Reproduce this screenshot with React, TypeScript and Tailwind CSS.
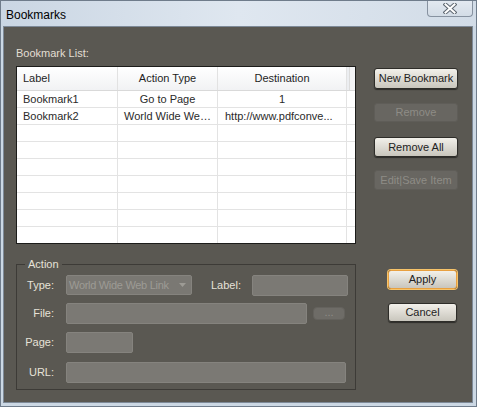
import React from "react";

const font = { fontFamily: "'Liberation Sans', Arial, sans-serif" };

const rows = [
  { label: "Bookmark1", type: "Go to Page", dest: "1", destLeft: false },
  { label: "Bookmark2", type: "World Wide We…", dest: "http://www.pdfconve...", destLeft: true },
  { label: "", type: "", dest: "", destLeft: false },
  { label: "", type: "", dest: "", destLeft: false },
  { label: "", type: "", dest: "", destLeft: false },
  { label: "", type: "", dest: "", destLeft: false },
  { label: "", type: "", dest: "", destLeft: false },
  { label: "", type: "", dest: "", destLeft: false },
  { label: "", type: "", dest: "", destLeft: false },
];

function Btn({ children, disabled, focus, className }: { children: React.ReactNode; disabled?: boolean; focus?: boolean; className?: string }) {
  if (disabled) {
    return (
      <div className={`flex items-center justify-center whitespace-nowrap rounded-[3px] border border-[#5f5d58] bg-[#686661] text-[11px] text-[#8e8c86] ${className ?? ""}`}>
        {children}
      </div>
    );
  }
  return (
    <div
      className={`flex items-center justify-center whitespace-nowrap rounded-[3px] border bg-gradient-to-b from-[#f2f0ea] to-[#c9c6bd] text-[11px] text-[#222] shadow-[0_1px_1px_rgba(0,0,0,0.5)] ${
        focus ? "border-[#e8a040] ring-1 ring-[#f7c46a]" : "border-[#2e2d29]"
      } ${className ?? ""}`}
    >
      {children}
    </div>
  );
}

function Field({ className }: { className?: string }) {
  return <div className={`rounded-[2px] border border-[#85837e] bg-[#7b7974] ${className ?? ""}`} />;
}

function Lbl({ children }: { children: React.ReactNode }) {
  return <div className="w-[37px] whitespace-nowrap text-right text-[11px] text-[#e6e2d8]">{children}</div>;
}

export default function App() {
  return (
    <div style={font} className="h-[407px] w-[477px] overflow-hidden border border-[#6f7c8b] bg-[#ccd8e4]">
      {/* title bar */}
      <div className="flex h-[25px] items-start bg-gradient-to-r from-[#cad6e3] via-[#dfe7f0] to-[#d2dce7]">
        <div className="pl-[5px] pt-[5px] text-[12px] text-black">Bookmarks</div>
        <div className="ml-auto mr-[3px] flex h-[17px] w-[46px] -translate-y-[1px] items-center justify-center rounded-b-[4px] border border-t-0 border-[#8792a0] bg-gradient-to-b from-[#e4eaf1] to-[#d3dce6]">
          <svg width="14" height="11" viewBox="0 0 14 11">
            <path d="M2.5 1.5 L11.5 9.5 M11.5 1.5 L2.5 9.5" stroke="#5d6670" strokeWidth="4" strokeLinecap="square" />
            <path d="M2.5 1.5 L11.5 9.5 M11.5 1.5 L2.5 9.5" stroke="#ffffff" strokeWidth="2" strokeLinecap="square" />
          </svg>
        </div>
      </div>

      {/* body */}
      <div className="ml-[2px] flex h-[377px] w-[470px] border border-[#7e8a98] bg-[#5a5852]">
        {/* left column */}
        <div className="ml-[12px] flex w-[340px] flex-col pt-[16px]">
          <div className="text-[11px] leading-[21px] text-[#e2ded3]">Bookmark List:</div>

          <div className="mt-[2px] h-[178px] overflow-hidden border border-[#1c1c1a] bg-white">
            <div className="flex h-[24px] border-b border-[#d9d9d9] bg-gradient-to-b from-white to-[#f1f2f4] text-[11px] text-[#1e1e1e]">
              <div className="flex w-[101px] items-center border-r border-[#e2e2e2] pl-[6px]">Label</div>
              <div className="flex w-[100px] items-center justify-center border-r border-[#e2e2e2]">Action Type</div>
              <div className="flex w-[129px] items-center justify-center border-r border-[#e2e2e2]">Destination</div>
              <div className="w-[3px] border-r border-[#dcdcdc] bg-[#eceef1]" />
              <div className="flex-1 bg-[#f3f4f6]" />
            </div>
            {rows.map((r, i) => (
              <div key={i} className="flex h-[17px] whitespace-nowrap border-b border-[#e3e3e3] text-[11px] text-[#2a2a2a]">
                <div className="flex w-[101px] items-center border-r border-[#e3e3e3] pl-[6px]">{r.label}</div>
                <div className="flex w-[100px] items-center justify-center border-r border-[#e3e3e3]">{r.type}</div>
                <div className={`flex w-[129px] items-center overflow-hidden border-r border-[#e3e3e3] ${r.destLeft ? "pl-[7px]" : "justify-center"}`}>
                  {r.dest}
                </div>
                <div className="flex-1" />
              </div>
            ))}
          </div>

          {/* Action group */}
          <div className="relative mt-[20px] h-[126px] border border-[#3d3b37] pt-[10px]">
            <div className="absolute -top-[9px] left-[8px] bg-[#5a5852] px-[3px] text-[11px] leading-[16px] text-[#e6e2d8]">Action</div>

            <div className="flex h-[20px] items-center">
              <Lbl>Type:</Lbl>
              <div className="ml-[12px] flex h-[20px] w-[126px] items-center whitespace-nowrap rounded-[2px] border border-[#85837e] bg-[#7a7873] pl-[2px] pr-[5px] text-[11px] tracking-[-0.3px] text-[#9d9b95]">
                <span>World Wide Web Link</span>
                <svg className="ml-auto shrink-0" width="7" height="4" viewBox="0 0 7 4">
                  <path d="M0 0 H7 L3.5 4 Z" fill="#9d9b95" />
                </svg>
              </div>
              <div className="ml-[19px] text-[11px] text-[#e6e2d8]">Label:</div>
              <Field className="ml-[11px] h-[21px] w-[96px]" />
            </div>

            <div className="mt-[8px] flex h-[21px] items-center">
              <Lbl>File:</Lbl>
              <Field className="ml-[12px] h-[21px] w-[241px]" />
              <div className="ml-[6px] flex h-[13px] w-[32px] items-center justify-center rounded-[4px] border border-[#64625d] bg-[#6e6c67] pb-[2px] text-[11px] text-[#8f8d87]">
                ...
              </div>
            </div>

            <div className="mt-[8px] flex h-[21px] items-center">
              <Lbl>Page:</Lbl>
              <Field className="ml-[12px] h-[21px] w-[67px]" />
            </div>

            <div className="mt-[9px] flex h-[21px] items-center">
              <Lbl>URL:</Lbl>
              <Field className="ml-[12px] h-[21px] w-[280px]" />
            </div>
          </div>
        </div>

        {/* right column */}
        <div className="flex flex-col">
          <Btn className="ml-[18px] mt-[41px] h-[21px] w-[84px]">New Bookmark</Btn>
          <Btn disabled className="ml-[18px] mt-[14px] h-[19px] w-[84px]">Remove</Btn>
          <Btn className="ml-[18px] mt-[15px] h-[20px] w-[84px]">Remove All</Btn>
          <Btn disabled className="ml-[18px] mt-[13px] h-[20px] w-[84px]">Edit|Save Item</Btn>
          <Btn focus className="ml-[32px] mt-[80px] h-[19px] w-[69px]">Apply</Btn>
          <Btn className="ml-[32px] mt-[14px] h-[19px] w-[69px]">Cancel</Btn>
        </div>
      </div>
    </div>
  );
}
